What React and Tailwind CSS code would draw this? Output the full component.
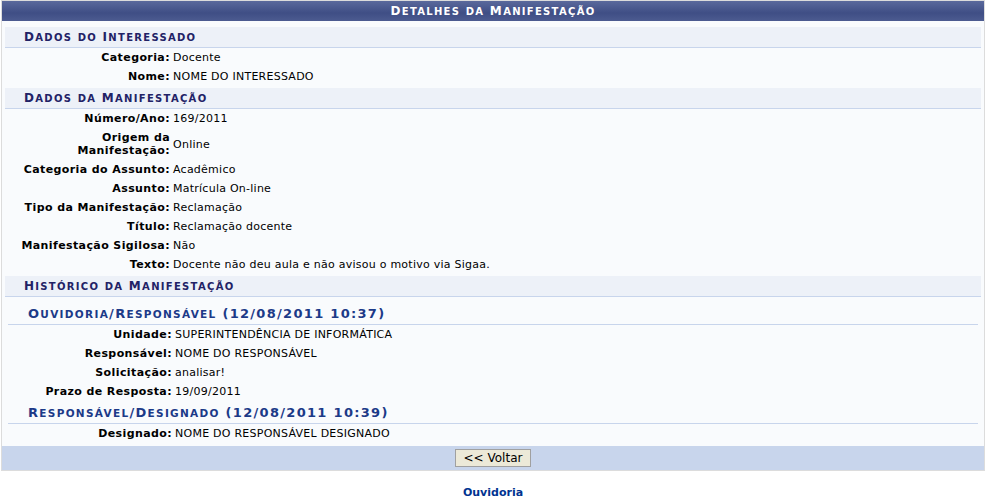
// Small caps drawn by hand: lowercase runs become uppercase at a smaller size
const SmallCaps = ({ text, small }) => {
  const parts = text.match(/[a-zà-ÿ]+|[^a-zà-ÿ]+/g) || [];
  return parts.map((p, i) =>
    /[a-zà-ÿ]/.test(p[0]) ? (
      <span key={i} className={`${small} leading-[0]`}>
        {p.toUpperCase()}
      </span>
    ) : (
      <span key={i}>{p}</span>
    )
  );
};

const Row = ({ label, children, cols }) => (
  <div className={`grid ${cols} gap-x-[3px] py-[3px] leading-[13px]`}>
    <span className="text-right font-bold tracking-[0.4px]">{label}</span>
    <span className="tracking-[0.25px]">{children}</span>
  </div>
);

const Section = ({ title }) => (
  <div className="mt-[2px] h-[21px] border-b border-[#c8d5ec] bg-[#edf1f8] pt-[3px] pl-[19px] text-[12px] leading-[14px] font-bold tracking-[1.3px] text-[#222266]">
    <SmallCaps text={title} small="text-[10px]" />
  </div>
);

const SubSection = ({ title, first }) => (
  <div
    className={`mx-[3px] h-[23px] border-b border-[#c8d5ec] pt-[3px] pl-[20px] text-[13px] leading-[17px] font-bold tracking-[1.3px] text-[#1c3a88] ${first ? 'mt-[5px]' : ''}`}
  >
    <SmallCaps text={title} small="text-[10.5px]" />
  </div>
);

const A = 'grid-cols-[165px_1fr]';
const B = 'grid-cols-[167px_1fr]';

export default function App() {
  return (
    <div className="min-h-[499px] bg-white font-['DejaVu_Sans',Verdana,sans-serif] text-[11px] text-black">
      <div className="mx-[1px] border border-[#dcdcdc] bg-[#f9fbfd]">
        <div className="h-[20px] bg-[linear-gradient(to_bottom,#5a699c,#3f4e85_60%,#4c5b90)] text-center text-[12px] leading-[20px] font-bold tracking-[1.3px] text-white">
          <SmallCaps text="Detalhes da Manifestação" small="text-[10px]" />
        </div>
        <div className="px-[3px] pt-[4px] pb-[3px]">
          <Section title="Dados do Interessado" />
          <Row cols={A} label="Categoria:">Docente</Row>
          <Row cols={A} label="Nome:">NOME DO INTERESSADO</Row>

          <Section title="Dados da Manifestação" />
          <Row cols={A} label="Número/Ano:">169/2011</Row>
          <div className={`grid ${A} items-center gap-x-[3px] py-[3px] leading-[13px]`}>
            <span className="text-right font-bold tracking-[0.4px]">
              Origem da
              <br />
              Manifestação:
            </span>
            <span className="tracking-[0.25px]">Online</span>
          </div>
          <Row cols={A} label="Categoria do Assunto:">Acadêmico</Row>
          <Row cols={A} label="Assunto:">Matrícula On-line</Row>
          <Row cols={A} label="Tipo da Manifestação:">Reclamação</Row>
          <Row cols={A} label="Título:">Reclamação docente</Row>
          <Row cols={A} label="Manifestação Sigilosa:">Não</Row>
          <Row cols={A} label="Texto:">Docente não deu aula e não avisou o motivo via Sigaa.</Row>

          <Section title="Histórico da Manifestação" />
          <SubSection first title="Ouvidoria/Responsável (12/08/2011 10:37)" />
          <Row cols={B} label="Unidade:">SUPERINTENDÊNCIA DE INFORMÁTICA</Row>
          <Row cols={B} label="Responsável:">NOME DO RESPONSÁVEL</Row>
          <Row cols={B} label="Solicitação:">analisar!</Row>
          <Row cols={B} label="Prazo de Resposta:">19/09/2011</Row>
          <SubSection title="Responsável/Designado (12/08/2011 10:39)" />
          <Row cols={B} label="Designado:">NOME DO RESPONSÁVEL DESIGNADO</Row>
        </div>
        <div className="flex justify-center bg-[#c8d5ec] py-[3px]">
          <button className="h-[18px] w-[76px] border border-[#a0a0a0] bg-[#ece9d8] text-[12px] leading-[16px] text-black">
            &lt;&lt; Voltar
          </button>
        </div>
      </div>
      <div className="mt-[15px] text-center text-[11px] leading-[13px] font-bold text-[#003390]">
        Ouvidoria
      </div>
    </div>
  );
}
